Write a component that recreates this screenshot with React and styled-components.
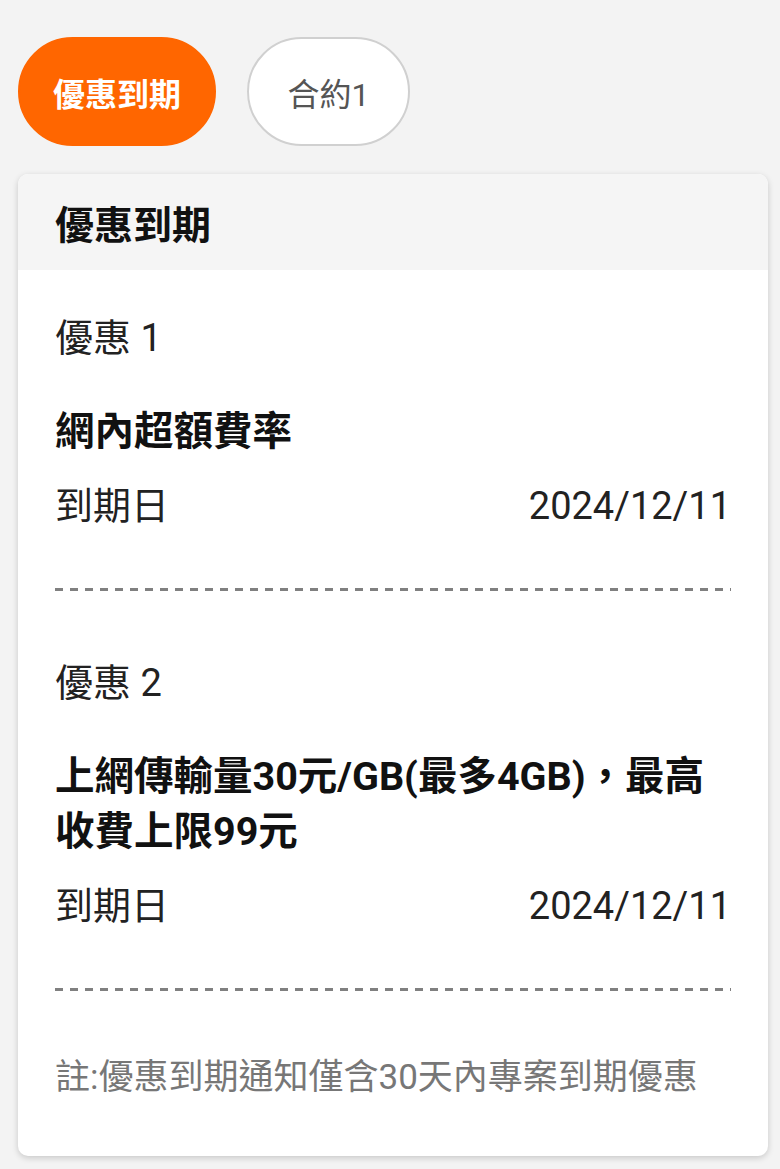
import styled, { createGlobalStyle } from "styled-components";

const GlobalStyle = createGlobalStyle`
  body {
    margin: 0;
    background-color: #f3f3f3;
    font-family: Roboto, "Noto Sans CJK TC", "Noto Sans", sans-serif;
    color: #222;
  }
`;

const offers = [
  { label: "優惠 1", name: "網內超額費率", date: "2024/12/11" },
  { label: "優惠 2", name: "上網傳輸量30元/GB(最多4GB)，最高收費上限99元", date: "2024/12/11" },
];

const App = () => {
  return (
    <Page>
      <GlobalStyle />
      <Tabs>
        <Tab $active>優惠到期</Tab>
        <Tab>合約1</Tab>
      </Tabs>
      <Card>
        <CardHeader>優惠到期</CardHeader>
        <CardBody>
          {offers.map((offer) => (
            <Offer key={offer.label}>
              <OfferLabel>{offer.label}</OfferLabel>
              <OfferName>{offer.name}</OfferName>
              <DateRow>
                <span>到期日</span>
                <span>{offer.date}</span>
              </DateRow>
              <Dashed />
            </Offer>
          ))}
          <Note>註:優惠到期通知僅含30天內專案到期優惠</Note>
        </CardBody>
      </Card>
    </Page>
  );
};

const Page = styled.div`
  padding: 37px 12px 14px 18px;
`;
const Tabs = styled.div`
  display: flex;
  gap: 31px;
  margin-bottom: 28px;
`;
const Tab = styled.div`
  display: flex;
  align-items: center;
  justify-content: center;
  box-sizing: border-box;
  height: 109px;
  min-width: 163px;
  padding: 0 33px;
  border-radius: 55px;
  font-size: 32px;
  font-weight: ${(p) => (p.$active ? 700 : 400)};
  color: ${(p) => (p.$active ? "#fff" : "#555")};
  background-color: ${(p) => (p.$active ? "#ff6600" : "#fff")};
  border: 2px solid ${(p) => (p.$active ? "#ff6600" : "#d0d0d0")};
`;
const Card = styled.div`
  background-color: #fff;
  border-radius: 10px;
  box-shadow: 0 2px 6px rgba(0, 0, 0, 0.18);
  overflow: hidden;
`;
const CardHeader = styled.div`
  height: 96px;
  display: flex;
  align-items: center;
  padding: 0 37px;
  background-color: #f5f5f5;
  font-size: 39px;
  font-weight: 700;
  color: #111;
`;
const CardBody = styled.div`
  padding: 0 37px 54px;
`;
const Offer = styled.div`
  padding-top: 66px;
  &:first-child {
    padding-top: 42px;
  }
`;
const OfferLabel = styled.div`
  font-size: 38px;
  line-height: 52px;
  margin-bottom: 40px;
`;
const OfferName = styled.div`
  font-size: 39.5px;
  font-weight: 700;
  line-height: 55px;
  color: #111;
  margin-bottom: 21px;
`;
const DateRow = styled.div`
  display: flex;
  justify-content: space-between;
  font-size: 38px;
  line-height: 52px;
`;
const Dashed = styled.div`
  height: 3px;
  margin-top: 56px;
  background-image: repeating-linear-gradient(
    to right,
    #808080 0,
    #808080 8px,
    transparent 8px,
    transparent 15px
  );
`;
const Note = styled.div`
  margin-top: 62px;
  font-size: 35px;
  line-height: 49px;
  color: #777;
`;

export default App;
